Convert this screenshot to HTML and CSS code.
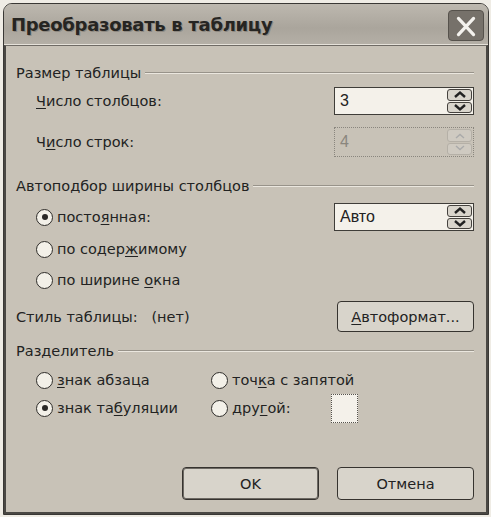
FILE: index.html
```html
<!DOCTYPE html>
<html lang="ru">
<head>
    <meta charset="UTF-8">
    <title>Преобразовать в таблицу</title>
    <link rel="stylesheet" href="styles.css">
</head>
<body>
    <div class="dialog">
        <div class="titlebar">
            <span class="title">Преобразовать в таблицу</span>
            <span class="close">
                <svg width="36" height="31" viewBox="0 0 36 31">
                    <path d="M10 7 L26 24 M26 7 L10 24" stroke="#f4f2ee" stroke-width="3.4" stroke-linecap="round"/>
                </svg>
            </span>
        </div>

        <div class="body">
            <!-- размер таблицы -->
            <div class="group g1"><span>Размер таблицы</span><i class="rule"></i></div>
            <div class="row r1">
                <span class="label"><u>Ч</u>исло столбцов:</span>
                <div class="field">
                    <span class="val">3</span>
                    <span class="spin">
                        <span class="sb"><svg width="16" height="9" viewBox="0 0 16 9"><path d="M3 7 L8 2.5 L13 7" fill="none" stroke="#222" stroke-width="2.4"/></svg></span>
                        <span class="sb"><svg width="16" height="9" viewBox="0 0 16 9"><path d="M3 2 L8 6.5 L13 2" fill="none" stroke="#222" stroke-width="2.4"/></svg></span>
                    </span>
                </div>
            </div>
            <div class="row r2">
                <span class="label">Ч<u>и</u>сло строк:</span>
                <div class="field off">
                    <span class="val">4</span>
                    <span class="spin">
                        <span class="sb"><svg width="16" height="9" viewBox="0 0 16 9"><path d="M4 7 L8 3.5 L12 7" fill="none" stroke="#aaa" stroke-width="1.4"/></svg></span>
                        <span class="sb"><svg width="16" height="9" viewBox="0 0 16 9"><path d="M4 2 L8 5.5 L12 2" fill="none" stroke="#aaa" stroke-width="1.4"/></svg></span>
                    </span>
                </div>
            </div>

            <!-- автоподбор -->
            <div class="group g2"><span>Автоподбор ширины столбцов</span><i class="rule"></i></div>
            <div class="row r3">
                <span class="opt"><i class="radio on"></i><span>посто<u>я</u>нная:</span></span>
                <div class="field">
                    <span class="val">Авто</span>
                    <span class="spin">
                        <span class="sb"><svg width="16" height="9" viewBox="0 0 16 9"><path d="M3 7 L8 2.5 L13 7" fill="none" stroke="#222" stroke-width="2.4"/></svg></span>
                        <span class="sb"><svg width="16" height="9" viewBox="0 0 16 9"><path d="M3 2 L8 6.5 L13 2" fill="none" stroke="#222" stroke-width="2.4"/></svg></span>
                    </span>
                </div>
            </div>
            <div class="row r4"><span class="opt"><i class="radio"></i><span>по содер<u>ж</u>имому</span></span></div>
            <div class="row r5"><span class="opt"><i class="radio"></i><span>по ширине <u>о</u>кна</span></span></div>

            <!-- стиль -->
            <div class="row r6 flat">
                <span>Стиль таблицы:&nbsp;&nbsp; (нет)</span>
                <span class="btn wide"><span><u>А</u>втоформат...</span></span>
            </div>

            <!-- разделитель -->
            <div class="group g3"><span>Разделитель</span><i class="rule"></i></div>
            <div class="row r7">
                <span class="opt col1"><i class="radio"></i><span><u>з</u>нак абзаца</span></span>
                <span class="opt"><i class="radio"></i><span>точ<u>к</u>а с запятой</span></span>
            </div>
            <div class="row r8">
                <span class="opt col1"><i class="radio on"></i><span>знак та<u>б</u>уляции</span></span>
                <span class="opt col2"><i class="radio"></i><span>дру<u>г</u>ой:</span></span>
                <span class="small-field"></span>
            </div>

            <div class="actions">
                <span class="btn def">OK</span>
                <span class="btn">Отмена</span>
            </div>
        </div>
    </div>
</body>
</html>
```

FILE: styles.css
```css
*{
    margin: 0;
    padding: 0;
    box-sizing: border-box;
}
body{
    background: #efece5;
    font-family: "DejaVu Sans", Verdana, sans-serif;
    font-size: 14.5px;
    color: #222;
    padding: 3px 2px 2px 3px;
}
u{
    text-decoration: underline;
    text-underline-offset: 2px;
}
.dialog{
    width: 486px;
    height: 512px;
    border: 1px solid #3a3835;
    border-radius: 9px 9px 0 0;
    background: #c8c2b7;
    display: flex;
    flex-direction: column;
    overflow: hidden;
}
.titlebar{
    height: 41px;
    background: linear-gradient(#bdb8af, #aaa59c 60%, #b4afa6);
    border-bottom: 1px solid #e6e2da;
    display: flex;
    align-items: center;
    justify-content: space-between;
    padding: 0 4px 0 7px;
}
.title{
    font-weight: bold;
    font-size: 18px;
    color: #262522;
    letter-spacing: -0.3px;
    text-shadow: 1px 1px 0 #8e8981;
}
.close{
    width: 36px;
    height: 31px;
    margin-top: 2px;
    background: #76716a;
    border: 1px solid #56524c;
    border-radius: 4px;
    display: flex;
}
.body{
    flex: 1;
    border: 2px solid #4a4844;
    border-top: 1px solid #6f6b65;
    padding: 14px 12px 0 10px;
    display: flex;
    flex-direction: column;
}
.group{
    height: 26px;
    display: flex;
    align-items: center;
    gap: 4px;
}
.rule{
    flex: 1;
    height: 2px;
    border-top: 1px solid #98938a;
    border-bottom: 1px solid #ebe7df;
}
.row{
    display: flex;
    align-items: center;
    justify-content: space-between;
    padding-left: 20px;
}
.row.flat{
    padding-left: 0;
}
.r1{ height: 28px; margin-top: 1px; }
.r2{ height: 30px; margin-top: 12px; }
.g2{ margin-top: 16px; }
.r3{ height: 28px; margin-top: 4px; }
.r4{ height: 26px; margin-top: 5px; }
.r5{ height: 26px; margin-top: 5px; }
.r6{ height: 31px; margin-top: 8px; }
.g3{ margin-top: 6px; }
.r7{ height: 26px; margin-top: 3px; justify-content: flex-start; }
.r8{ height: 30px; margin-top: 0; justify-content: flex-start; }

.field{
    width: 140px;
    height: 100%;
    background: #f4f1ea;
    border: 1px solid #3f3d39;
    display: flex;
    align-items: center;
    justify-content: space-between;
    padding: 0 1px 0 5px;
    font-size: 16px;
    font-family: "Liberation Sans", Arial, sans-serif;
}
.field.off{
    background: #c8c2b7;
    border: 1px dotted #8a867e;
    color: #8a867e;
}
.spin{
    width: 25px;
    height: calc(100% - 2px);
    display: flex;
    flex-direction: column;
    gap: 1px;
}
.sb{
    flex: 1;
    border: 1px solid #45423e;
    border-radius: 3px;
    background: #d9d5cc;
    display: flex;
    align-items: center;
    justify-content: center;
}
.off .sb{
    border-color: #b5b0a7;
    background: #cfcac1;
}
.opt{
    display: flex;
    align-items: center;
    gap: 4px;
}
.col1{
    width: 175px;
}
.col2{
    width: 120px;
}
.radio{
    width: 17px;
    height: 17px;
    border: 1px solid #2f2d2a;
    border-radius: 50%;
    background: #f3f0e8;
    display: flex;
    align-items: center;
    justify-content: center;
}
.radio.on::after{
    content: "";
    width: 6px;
    height: 6px;
    border-radius: 50%;
    background: #2a2826;
}
.small-field{
    width: 27px;
    height: 29px;
    background: #f4f1ea;
    border: 1px dotted #55524d;
}
.btn{
    width: 137px;
    height: 33px;
    border: 1px solid #36332f;
    border-radius: 4px;
    background: #d8d4cb;
    display: flex;
    align-items: center;
    justify-content: center;
}
.btn.wide{
    height: 31px;
}
.btn.def{
    box-shadow: inset 0 0 0 1px #6d6963;
}
.actions{
    margin-top: 44px;
    display: flex;
    justify-content: flex-end;
    gap: 18px;
}
```
